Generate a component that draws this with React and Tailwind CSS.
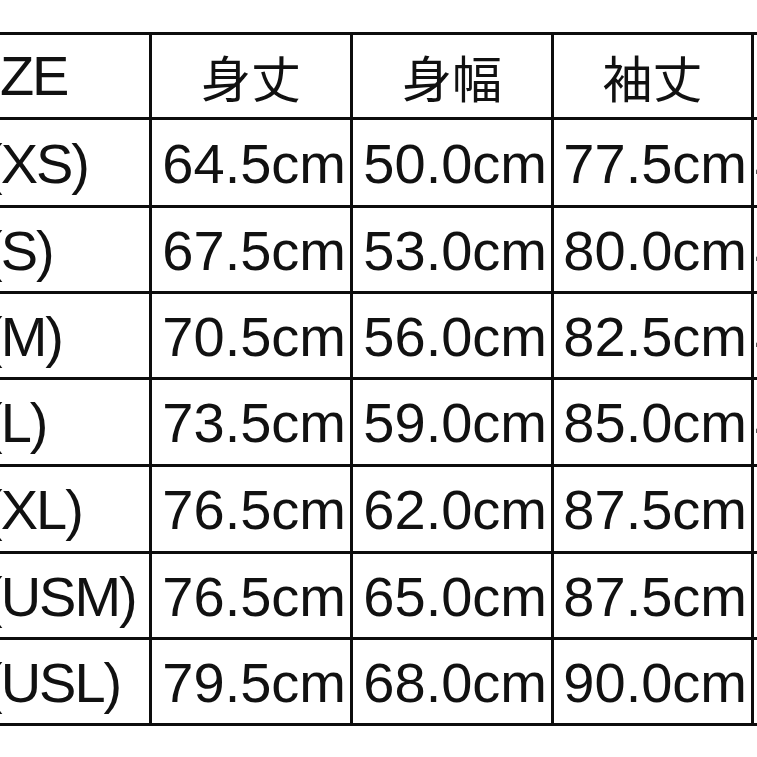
import { Fragment } from "react"

const rows = [
    ["(XS)", "64.5cm", "50.0cm", "77.5cm", "44.0cm"],
    ["(S)", "67.5cm", "53.0cm", "80.0cm", "45.5cm"],
    ["(M)", "70.5cm", "56.0cm", "82.5cm", "47.0cm"],
    ["(L)", "73.5cm", "59.0cm", "85.0cm", "48.5cm"],
    ["(XL)", "76.5cm", "62.0cm", "87.5cm", "50.0cm"],
    ["(USM)", "76.5cm", "65.0cm", "87.5cm", "51.5cm"],
    ["(USL)", "79.5cm", "68.0cm", "90.0cm", "53.0cm"],
]

const heads = ["身丈", "身幅", "袖丈"]

function App(){
    return(
        <div className="w-[757px] h-[757px] overflow-hidden bg-white text-[#111] font-['Liberation_Sans','Noto_Sans_CJK_JP',sans-serif]">
            <div className="mt-[32px] ml-[-103px] w-max border-[3px] border-[#0d0d0d] bg-[#0d0d0d] grid grid-cols-[249px_198px_198px_197px_198px] grid-rows-[82px_85px_83px_83px_84px_84px_83px_83px] gap-[3px]">
                <div className="bg-white flex items-center pl-[51px] text-[56px] leading-none tracking-[-2px]">SIZE</div>
                {heads.map(h=>(
                    <div key={h} className="bg-white flex items-center justify-center text-[50px] leading-none font-['Noto_Sans_CJK_JP',sans-serif]">{h}</div>
                ))}
                <div className="bg-white flex items-center justify-center text-[50px] leading-none font-['Noto_Sans_CJK_JP',sans-serif]">肩幅</div>
                {rows.map(r=>(
                    <Fragment key={r[0]}>
                        <div className="bg-white flex items-center pl-[84px] text-[56px] leading-none tracking-[-2px] pt-[2px]">{r[0]}</div>
                        <div className="bg-white flex items-center justify-end pr-[4px] text-[56px] leading-none pt-[2px]">{r[1]}</div>
                        <div className="bg-white flex items-center justify-end pr-[4px] text-[56px] leading-none pt-[2px]">{r[2]}</div>
                        <div className="bg-white flex items-center justify-end pr-[4px] text-[56px] leading-none pt-[2px]">{r[3]}</div>
                        <div className="bg-white flex items-center pl-[1px] text-[56px] leading-none pt-[2px]">{r[4]}</div>
                    </Fragment>
                ))}
            </div>
        </div>
    )
}

export default App
